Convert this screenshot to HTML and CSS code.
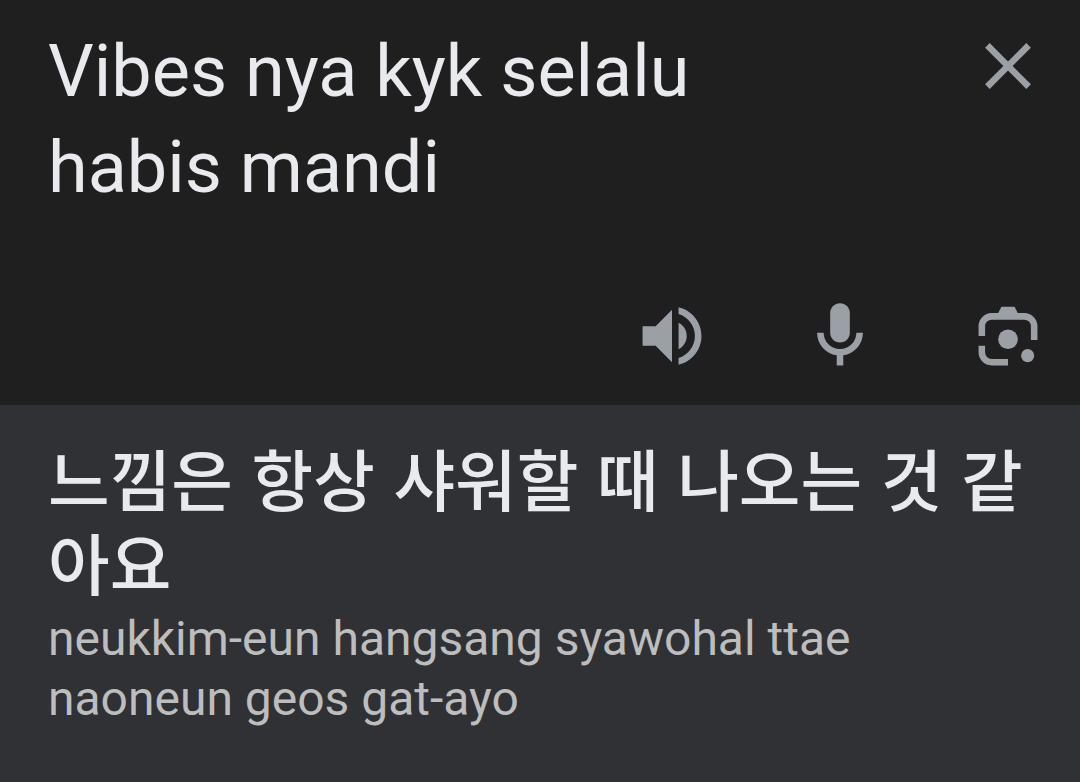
FILE: index.html
```html
<!DOCTYPE html>
<html lang="id">
<head>
    <meta charset="utf-8">
    <meta name="viewport" content="width=device-width, initial-scale=1">
    <title>Translate</title>
    <link rel="stylesheet" href="styles.css">
</head>
<body>

    <!-- Source text and input tools -->
    <section class="source">
        <div class="source-top">
            <p class="source-text">Vibes nya kyk selalu habis mandi</p>
            <button type="button" class="icon-button" aria-label="Clear text">
                <svg class="icon" viewBox="1 1 22 22">
                    <path d="M19 6.41L17.59 5 12 10.59 6.41 5 5 6.41 10.59 12 5 17.59 6.41 19 12 13.41 17.59 19 19 17.59 13.41 12z"/>
                </svg>
            </button>
        </div>

        <div class="tools">
            <button type="button" class="icon-button" aria-label="Listen">
                <svg class="icon" viewBox="1 1 22 22">
                    <path d="M3 9v6h4l5 5V4L7 9z"/>
                    <path d="M14 7.97v8.05c1.48-.73 2.5-2.25 2.5-4.02s-1.02-3.29-2.5-4.03z"/>
                    <path d="M14 3.23v2.06c2.89.86 5 3.54 5 6.71s-2.11 5.85-5 6.71v2.06c4.01-.91 7-4.49 7-8.77s-2.99-7.86-7-8.77z"/>
                </svg>
            </button>
            <button type="button" class="icon-button" aria-label="Speak">
                <svg class="icon" viewBox="1 1 22 22">
                    <path d="M12 14c1.66 0 3-1.34 3-3V5c0-1.66-1.34-3-3-3S9 3.34 9 5v6c0 1.66 1.34 3 3 3z"/>
                    <path d="M17 11c0 2.76-2.24 5-5 5s-5-2.24-5-5H5c0 3.53 2.61 6.43 6 6.92V21h2v-3.08c3.39-.49 6-3.39 6-6.92z"/>
                </svg>
            </button>
            <button type="button" class="icon-button" aria-label="Camera">
                <svg class="icon" viewBox="1 1 22 22">
                    <path d="M3 12V9a4 4 0 0 1 4-4h2l1-1.9h4L15 5h2a4 4 0 0 1 4 4v4.2h-2V9a2 2 0 0 0-2-2H7a2 2 0 0 0-2 2v3z"/>
                    <path d="M3 15v2a4 4 0 0 0 4 4h5v-2H7a2 2 0 0 1-2-2v-2z"/>
                    <circle cx="12" cy="13" r="3"/>
                    <circle cx="18" cy="18" r="2"/>
                </svg>
            </button>
        </div>
    </section>

    <!-- Translation result -->
    <section class="result">
        <p class="result-text" lang="ko">느낌은 항상 샤워할 때 나오는 것 같아요</p>
        <p class="romanized">neukkim-eun hangsang syawohal ttae naoneun geos gat-ayo</p>
    </section>

</body>
</html>
```
FILE: styles.css
```css
body {
    margin: 0;
    min-height: 100vh;
    display: flex;
    flex-direction: column;
    background-color: #303135;
    font-family: Roboto, "Noto Sans CJK KR", sans-serif;
}

p {
    margin: 0;
}

.source {
    background-color: #1f1f1f;
    padding: 24px 36px 33px 48px;
}

.source-top {
    display: flex;
    justify-content: space-between;
    align-items: flex-start;
    gap: 180px;
}

.source-text {
    color: #e8eaed;
    font-size: 72px;
    line-height: 96px;
}

.tools {
    display: flex;
    justify-content: flex-end;
    gap: 96px;
    margin-top: 84px;
}

.icon-button {
    flex: none;
    padding: 0;
    margin: 0;
    border: none;
    background: none;
    color: #9aa0a6;
    cursor: pointer;
}

.source-top .icon-button {
    margin-top: 6px;
}

.icon {
    display: block;
    width: 72px;
    height: 72px;
    fill: currentColor;
}

.result {
    flex: 1;
    padding: 36px 48px;
}

.result-text {
    color: #e8eaed;
    font-family: "Liberation Sans", "Noto Sans CJK KR", sans-serif;
    font-size: 67px;
    font-weight: 500;
    line-height: 84px;
    word-break: break-all;
}

.romanized {
    color: #bdbdbd;
    font-size: 48px;
    line-height: 60px;
}
```
